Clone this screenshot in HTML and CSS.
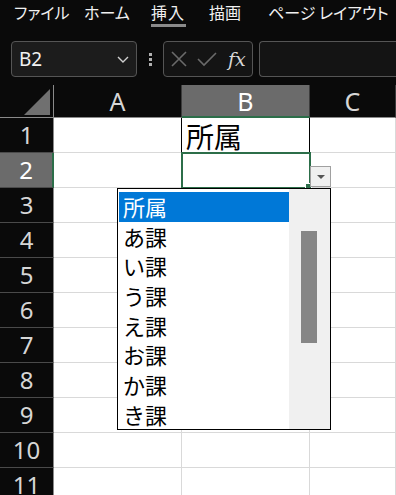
FILE: index.html
```html
<!DOCTYPE html>
<html lang="ja">
<head>
    <meta charset="UTF-8">
    <meta name="viewport" content="width=device-width, initial-scale=1.0">
    <title>所属 リスト</title>
    <link rel="stylesheet" href="styles.css">
</head>
<body>
    <!-- Ribbon tabs -->
    <div class="tabs">
        <span class="tab t-file">ファイル</span>
        <span class="tab t-home">ホーム</span>
        <span class="tab t-ins"><span class="active">挿入</span></span>
        <span class="tab t-draw">描画</span>
        <span class="tab">ページ レイアウト</span>
    </div>

    <!-- Formula bar -->
    <div class="formula-bar">
        <div class="name-box">
            <span>B2</span>
            <svg width="14" height="10" viewBox="0 0 14 10"><path d="M2 3 L7 8 L12 3" fill="none" stroke="#d0d0d0" stroke-width="1.4"/></svg>
        </div>
        <div class="dots"><i></i><i></i><i></i></div>
        <div class="fx-box">
            <svg width="18" height="18" viewBox="0 0 18 18"><path d="M2 2 L16 16 M16 2 L2 16" stroke="#6a6a6a" stroke-width="1.6"/></svg>
            <svg width="22" height="18" viewBox="0 0 22 18"><path d="M2 9 L8 15 L20 3" fill="none" stroke="#6a6a6a" stroke-width="1.6"/></svg>
            <span class="fx">fx</span>
        </div>
        <div class="formula-input"></div>
    </div>

    <!-- Sheet -->
    <div class="sheet">
        <div class="grid">
            <div class="corner"><span class="tri"></span></div>
            <div class="col-h">A</div>
            <div class="col-h sel">B</div>
            <div class="col-h">C</div>

            <div class="row-h">1</div>
            <div class="cell edge"></div>
            <div class="cell boxed">所属</div>
            <div class="cell"></div>

            <div class="row-h sel">2</div>
            <div class="cell"></div>
            <div class="cell active"><span class="handle"></span></div>
            <div class="cell"></div>

            <div class="row-h">3</div><div class="cell"></div><div class="cell"></div><div class="cell"></div>
            <div class="row-h">4</div><div class="cell"></div><div class="cell"></div><div class="cell"></div>
            <div class="row-h">5</div><div class="cell"></div><div class="cell"></div><div class="cell"></div>
            <div class="row-h">6</div><div class="cell"></div><div class="cell"></div><div class="cell"></div>
            <div class="row-h">7</div><div class="cell"></div><div class="cell"></div><div class="cell"></div>
            <div class="row-h">8</div><div class="cell"></div><div class="cell"></div><div class="cell"></div>
            <div class="row-h">9</div><div class="cell"></div><div class="cell"></div><div class="cell"></div>
            <div class="row-h">10</div><div class="cell"></div><div class="cell"></div><div class="cell"></div>
            <div class="row-h">11</div><div class="cell"></div><div class="cell"></div><div class="cell"></div>
        </div>

        <!-- Validation dropdown -->
        <div class="dd-btn"><span class="arrow"></span></div>
        <div class="dd-list">
            <ul class="items">
                <li class="picked">所属</li>
                <li>あ課</li>
                <li>い課</li>
                <li>う課</li>
                <li>え課</li>
                <li>お課</li>
                <li>か課</li>
                <li>き課</li>
            </ul>
            <div class="scroll"><div class="thumb"></div></div>
        </div>
    </div>
</body>
</html>
```

FILE: styles.css
```css
body {
    margin: 0;
    width: 396px;
    height: 495px;
    overflow: hidden;
    background-color: #0a0a0a;
    font-family: "Noto Sans", "Noto Sans CJK JP", sans-serif;
    color: #e6e6e6;
}

/* tabs */
.tabs {
    height: 35px;
    display: flex;
    padding-left: 14px;
    font-family: "Noto Sans CJK JP", sans-serif;
    font-feature-settings: "palt";
    font-size: 16px;
    line-height: 24px;
}
.tab {
    color: #f0f0f0;
    white-space: nowrap;
}
.t-file { width: 70px; }
.t-home { width: 67px; }
.t-ins { width: 58px; }
.t-draw { width: 59px; }
.tab .active {
    display: inline-block;
    width: 35px;
    height: 27px;
    box-shadow: inset 0 -3px 0 #8a8a8a;
    letter-spacing: 1px;
}

/* formula bar */
.formula-bar {
    height: 50px;
    box-sizing: border-box;
    padding: 6px 0 0 11px;
    display: flex;
    align-items: flex-start;
}
.name-box {
    width: 126px;
    height: 36px;
    box-sizing: border-box;
    border: 1px solid #555;
    border-radius: 4px;
    background-color: #1c1c1c;
    display: flex;
    align-items: center;
    justify-content: space-between;
    padding: 0 6px 0 7px;
    font-size: 19px;
    color: #f2f2f2;
}
.dots {
    width: 26px;
    height: 36px;
    display: flex;
    flex-direction: column;
    align-items: center;
    justify-content: center;
    gap: 2px;
}
.dots i {
    width: 3px;
    height: 3px;
    background-color: #b0b0b0;
}
.fx-box {
    width: 90px;
    height: 36px;
    box-sizing: border-box;
    border: 1px solid #555;
    border-radius: 4px;
    background-color: #141414;
    display: flex;
    align-items: center;
    gap: 8px;
    padding-left: 6px;
}
.fx {
    font-family: "DejaVu Serif", serif;
    font-style: italic;
    font-size: 19px;
    color: #d8d8d8;
    margin-left: 2px;
}
.formula-input {
    flex: 1;
    height: 36px;
    margin-left: 6px;
    box-sizing: border-box;
    border: 1px solid #555;
    border-right: none;
    border-radius: 4px 0 0 4px;
    background-color: #141414;
}

/* sheet */
.sheet {
    position: relative;
}
.grid {
    display: grid;
    grid-template-columns: 54px 128px 128px 1fr;
    grid-template-rows: 33px;
    grid-auto-rows: 35px;
}
.corner {
    background-color: #0a0a0a;
    border-right: 1px solid #8a8a8a;
    border-bottom: 1px solid #8a8a8a;
    position: relative;
}
.tri {
    position: absolute;
    left: 24px;
    top: 4px;
    width: 0;
    height: 0;
    border-left: 26px solid transparent;
    border-bottom: 26px solid #707070;
}
.col-h {
    box-sizing: border-box;
    background-color: #0a0a0a;
    border-right: 1px solid #3c3c3c;
    border-bottom: 1px solid #8a8a8a;
    text-align: center;
    font-size: 25px;
    line-height: 32px;
    color: #d6d6d6;
}
.col-h.sel {
    background-color: #6b6b6b;
    color: #fff;
    border-bottom: 2px solid #2c6e49;
}
.row-h {
    box-sizing: border-box;
    background-color: #0a0a0a;
    border-right: 1px solid #8a8a8a;
    border-bottom: 1px solid #4a4a4a;
    text-align: center;
    font-size: 24px;
    line-height: 34px;
    color: #d6d6d6;
}
.row-h.sel {
    background-color: #6b6b6b;
    color: #fff;
    border-right: 2px solid #2c6e49;
}
.cell {
    box-sizing: border-box;
    background-color: #fff;
    border-right: 1px solid #d9d9d9;
    border-bottom: 1px solid #d9d9d9;
    font-family: "Noto Sans CJK JP", sans-serif;
    color: #000;
}
.cell.edge {
    border-right-color: #000;
}
.cell.boxed {
    border-right-color: #000;
    font-size: 28px;
    line-height: 36px;
    padding-left: 4px;
}
.cell.active {
    outline: 2px solid #2c6e49;
    outline-offset: -1px;
    position: relative;
}
.handle {
    position: absolute;
    right: -3px;
    bottom: -3px;
    width: 5px;
    height: 5px;
    background-color: #2c6e49;
    border: 1px solid #fff;
}

/* dropdown */
.dd-btn {
    position: absolute;
    left: 310px;
    top: 81px;
    width: 21px;
    height: 21px;
    box-sizing: border-box;
    border: 1px solid #a0a0a0;
    background-color: #f0f0f0;
    display: flex;
    align-items: center;
    justify-content: center;
}
.arrow {
    width: 0;
    height: 0;
    border-left: 4px solid transparent;
    border-right: 4px solid transparent;
    border-top: 4px solid #555;
}
.dd-list {
    position: absolute;
    left: 117px;
    top: 103px;
    width: 214px;
    height: 242px;
    box-sizing: border-box;
    border: 1px solid #000;
    background-color: #fff;
    display: flex;
}
.items {
    list-style: none;
    margin: 0;
    padding: 3px 0 0 1px;
    flex: 1;
    font-family: "Noto Sans CJK JP", sans-serif;
    font-size: 22px;
    color: #000;
}
.items li {
    height: 29.7px;
    line-height: 29.7px;
    padding-left: 4px;
}
.items li.picked {
    background-color: #0078d7;
    color: #fff;
}
.scroll {
    width: 41px;
    background-color: #f0f0f0;
    padding-top: 42px;
    box-sizing: border-box;
}
.thumb {
    width: 16px;
    height: 112px;
    margin-left: 12px;
    background-color: #868686;
}
```
